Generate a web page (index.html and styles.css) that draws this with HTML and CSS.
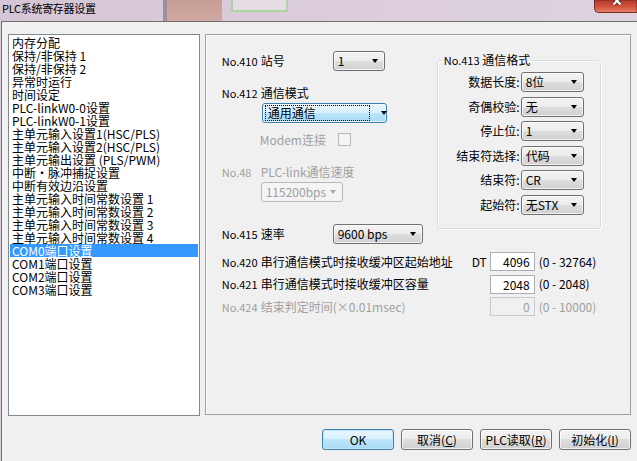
FILE: index.html
```html
<!DOCTYPE html>
<html lang="zh-CN">
<head>
    <meta charset="UTF-8">
    <title>PLC系统寄存器设置</title>
    <link rel="stylesheet" href="styles.css">
</head>
<body>
    <div class="titlebar">
        <span class="title">PLC系统寄存器设置</span>
        <span class="close-btn">
            <svg width="43" height="13" viewBox="0 0 43 13">
                <defs>
                    <linearGradient id="closeGrad" x1="0" y1="0" x2="0" y2="1">
                        <stop offset="0" stop-color="#b23a2c"/>
                        <stop offset="0.55" stop-color="#d4533e"/>
                        <stop offset="1" stop-color="#e58670"/>
                    </linearGradient>
                </defs>
                <path d="M0.5 0 V8.5 Q0.5 12.5 4.5 12.5 H43 V0 Z" fill="url(#closeGrad)" stroke="#7d2c22"/>
                <path d="M19.5 -3 L26.5 4.5 M26.5 -3 L19.5 4.5" stroke="#5a2a26" stroke-width="4"/>
                <path d="M19.5 -3 L26.5 4.5 M26.5 -3 L19.5 4.5" stroke="#ffffff" stroke-width="2.2"/>
            </svg>
        </span>
    </div>

    <div class="dialog">
        <div class="main">
            <ul class="nav-list">
                <li>内存分配</li>
                <li>保持/非保持 1</li>
                <li>保持/非保持 2</li>
                <li>异常时运行</li>
                <li>时间设定</li>
                <li>PLC-linkW0-0设置</li>
                <li>PLC-linkW0-1设置</li>
                <li>主单元输入设置1(HSC/PLS)</li>
                <li>主单元输入设置2(HSC/PLS)</li>
                <li>主单元输出设置 (PLS/PWM)</li>
                <li>中断·脉冲捕捉设置</li>
                <li>中断有效边沿设置</li>
                <li>主单元输入时间常数设置 1</li>
                <li>主单元输入时间常数设置 2</li>
                <li>主单元输入时间常数设置 3</li>
                <li>主单元输入时间常数设置 4</li>
                <li class="active">COM0端口设置</li>
                <li>COM1端口设置</li>
                <li>COM2端口设置</li>
                <li>COM3端口设置</li>
            </ul>

            <div class="panel">
                <div class="panel-top">
                    <div class="col-left">
                        <div class="row">
                            <div class="lbl lbl-short"><span class="no">No.410</span>站号</div>
                            <div class="combo w-station"><span class="combo-text">1</span><span class="combo-arrow"></span></div>
                        </div>

                        <div class="lbl lbl-mode"><span class="no">No.412</span>通信模式</div>
                        <div class="combo focus w-mode"><span class="combo-text">通用通信</span><span class="combo-arrow"></span></div>

                        <div class="modem">
                            <span class="modem-text">Modem连接</span>
                            <span class="check"></span>
                        </div>

                        <div class="lbl lbl-link disabled"><span class="no">No.48</span>PLC-link通信速度</div>
                        <div class="combo off w-link"><span class="combo-text">115200bps</span><span class="combo-arrow"></span></div>

                        <div class="row row-rate">
                            <div class="lbl lbl-short"><span class="no">No.415</span>速率</div>
                            <div class="combo w-rate"><span class="combo-text">9600 bps</span><span class="combo-arrow"></span></div>
                        </div>
                    </div>

                    <fieldset class="group">
                        <legend><span class="no-legend">No.413</span> 通信格式</legend>
                        <div class="g-row">
                            <span class="g-lbl">数据长度:</span>
                            <div class="combo w-fmt"><span class="combo-text">8位</span><span class="combo-arrow"></span></div>
                        </div>
                        <div class="g-row">
                            <span class="g-lbl">奇偶校验:</span>
                            <div class="combo w-fmt"><span class="combo-text">无</span><span class="combo-arrow"></span></div>
                        </div>
                        <div class="g-row">
                            <span class="g-lbl">停止位:</span>
                            <div class="combo w-fmt"><span class="combo-text">1</span><span class="combo-arrow"></span></div>
                        </div>
                        <div class="g-row">
                            <span class="g-lbl">结束符选择:</span>
                            <div class="combo w-fmt"><span class="combo-text">代码</span><span class="combo-arrow"></span></div>
                        </div>
                        <div class="g-row">
                            <span class="g-lbl">结束符:</span>
                            <div class="combo w-fmt"><span class="combo-text">CR</span><span class="combo-arrow"></span></div>
                        </div>
                        <div class="g-row">
                            <span class="g-lbl">起始符:</span>
                            <div class="combo w-fmt"><span class="combo-text">无STX</span><span class="combo-arrow"></span></div>
                        </div>
                    </fieldset>
                </div>

                <div class="fields">
                    <div class="f-row">
                        <div class="lbl lbl-long"><span class="no">No.420</span>串行通信模式时接收缓冲区起始地址</div>
                        <span class="prefix">DT</span>
                        <span class="num">4096</span>
                        <span class="range">(0 - 32764)</span>
                    </div>
                    <div class="f-row">
                        <div class="lbl lbl-long"><span class="no">No.421</span>串行通信模式时接收缓冲区容量</div>
                        <span class="prefix"></span>
                        <span class="num">2048</span>
                        <span class="range">(0 - 2048)</span>
                    </div>
                    <div class="f-row disabled">
                        <div class="lbl lbl-long"><span class="no">No.424</span>结束判定时间(×0.01msec)</div>
                        <span class="prefix"></span>
                        <span class="num off">0</span>
                        <span class="range">(0 - 10000)</span>
                    </div>
                </div>
            </div>
        </div>

        <div class="buttons">
            <button class="btn btn-default">OK</button>
            <button class="btn">取消(<u>C</u>)</button>
            <button class="btn">PLC读取(<u>R</u>)</button>
            <button class="btn">初始化(<u>I</u>)</button>
        </div>
    </div>
</body>
</html>
```

FILE: styles.css
```css
* {
    margin: 0;
    padding: 0;
    box-sizing: border-box;
}

body {
    width: 637px;
    height: 461px;
    overflow: hidden;
    background: #dccfdc;
    font-family: "Noto Sans CJK SC", "Liberation Sans", sans-serif;
    font-size: 12px;
    color: #000;
}

/* barra de titulo (vidro desfocado) */
.titlebar {
    height: 21px;
    display: flex;
    align-items: flex-start;
    background:
        linear-gradient(#e6dce6, #e6dce6) 233px 0 / 53px 10px no-repeat,
        linear-gradient(#a9d79e, #a9d79e) 231px 0 / 57px 12px no-repeat,
        linear-gradient(to bottom, #c89e94, #cfaaa2) 167px 0 / 55px 21px no-repeat,
        linear-gradient(#9d8f9d, #9d8f9d) 163px 0 / 4px 21px no-repeat,
        linear-gradient(to right, #d5c5d5, #dacbda 40%, #dfd3df);
}

.title {
    font-size: 11px;
    line-height: 16px;
    padding-left: 2px;
    letter-spacing: -0.3px;
}

.close-btn {
    margin-left: auto;
    width: 43px;
    height: 13px;
    display: block;
}

.close-btn svg {
    display: block;
}

.dialog {
    margin-left: 1px;
    height: 440px;
    border-top: 1px solid #6f6f6f;
    border-left: 1px solid #6f6f6f;
    background: #f0f0f0;
    padding: 12px 6px 0 6px;
}

.main {
    display: flex;
    align-items: flex-start;
    gap: 5px;
}

/* lista da esquerda */
.nav-list {
    list-style: none;
    width: 192px;
    height: 382px;
    background: #fff;
    border: 1px solid #828790;
    padding: 1px;
}

.nav-list li {
    height: 13px;
    line-height: 13px;
    padding-left: 2px;
    white-space: nowrap;
}

.nav-list li.active {
    background: #3399ff;
    color: #fff;
}

/* painel da direita */
.panel {
    width: 427px;
    height: 381px;
    border: 1px solid #a0a0a0;
    box-shadow: inset 1px 1px #fff;
    padding: 16px 0 0 16px;
}

.panel-top {
    display: flex;
    align-items: flex-start;
}

.col-left {
    width: 215px;
}

.row {
    display: flex;
    align-items: center;
    height: 20px;
}

.lbl {
    line-height: 14px;
    white-space: nowrap;
}

.lbl .no {
    display: inline-block;
    width: 39px;
    font-size: 11px;
}

.no-legend {
    font-size: 11px;
}

.lbl-short {
    width: 111px;
}

.lbl-mode {
    margin-top: 15px;
}

.lbl-link {
    margin-top: 19px;
}

.lbl-long {
    width: 250px;
}

.disabled,
.disabled .range {
    color: #a0a0a0;
}

/* combobox */
.combo {
    display: flex;
    align-items: center;
    height: 20px;
    border: 1px solid #707070;
    border-radius: 3px;
    background: linear-gradient(#f3f3f3, #ececec 50%, #dedede 50%, #d0d0d0);
    box-shadow: inset 0 0 0 1px rgba(255,255,255,0.7);
    padding: 0 6px 0 4px;
}

.combo-text {
    flex: 1;
    line-height: 14px;
    white-space: nowrap;
}

.combo-arrow {
    width: 0;
    height: 0;
    border-left: 3.5px solid transparent;
    border-right: 3.5px solid transparent;
    border-top: 4px solid #000;
}

.combo.focus {
    border-color: #3c7fb1;
    background: linear-gradient(#eaf6fd, #d9f0fc 50%, #bee6fd 50%, #a7d9f5);
    padding-left: 2px;
    margin-top: 3px;
    margin-left: 40px;
}

.combo.focus .combo-text {
    flex: none;
    width: 105px;
    height: 16px;
    line-height: 14px;
    border: 1px dotted #000;
    padding-left: 2px;
    margin-right: 11px;
}

.combo.off {
    border-color: #b9b9b9;
    background: #f4f4f4;
    box-shadow: none;
    color: #a0a0a0;
    margin-top: 3px;
    margin-left: 39px;
}

.combo.off .combo-arrow {
    border-top-color: #a8a8a8;
}

.w-station { width: 52px; }
.w-mode { width: 125px; }
.w-link { width: 82px; }
.w-rate { width: 90px; }
.w-fmt { width: 63px; }

.modem {
    display: flex;
    align-items: center;
    height: 13px;
    margin-top: 10px;
    margin-left: 38px;
    color: #a0a0a0;
}

.modem-text {
    width: 78px;
}

.check {
    width: 13px;
    height: 13px;
    border: 1px solid #b8b8b8;
    background: #f4f4f4;
}

.row-rate {
    margin-top: 22px;
}

/* caixa de grupo */
.group {
    width: 164px;
    margin-top: 2px;
    border: 1px solid #d5dfe5;
    border-radius: 3px;
    box-shadow: inset 1px 1px #fff, 1px 1px #fff;
    padding: 0 0 13px 0;
}

.group legend {
    margin-left: 5px;
    padding: 0 1px;
    line-height: 14px;
}

.g-row {
    display: flex;
    align-items: center;
    height: 20px;
    margin-top: 4.5px;
}

.g-row:first-of-type {
    margin-top: 5px;
}

.g-lbl {
    width: 83px;
    text-align: right;
    padding-right: 1px;
    line-height: 14px;
}

/* campos numericos */
.fields {
    margin-top: 8px;
    display: flex;
    flex-direction: column;
    gap: 3.5px;
}

.f-row {
    display: flex;
    align-items: center;
    height: 19px;
}

.prefix {
    width: 18px;
    line-height: 14px;
}

.num {
    width: 45px;
    height: 19px;
    border: 1px solid #abadb3;
    background: #fff;
    text-align: right;
    padding-right: 4px;
    line-height: 17px;
}

.num.off {
    background: #f0f0f0;
    border-color: #c9c9c9;
}

.range {
    margin-left: 4px;
    line-height: 14px;
}

/* botoes */
.buttons {
    display: flex;
    justify-content: flex-end;
    gap: 7px;
    margin-top: 13px;
}

.btn {
    width: 72px;
    height: 21px;
    border: 1px solid #707070;
    border-radius: 3px;
    background: linear-gradient(#f3f3f3, #ececec 50%, #dedede 50%, #d0d0d0);
    box-shadow: inset 0 0 0 1px rgba(255,255,255,0.7);
    font: inherit;
    line-height: 17px;
    color: #000;
}

.btn-default {
    border-color: #3c7fb1;
    background: linear-gradient(#eaf6fd, #d9f0fc 50%, #bee6fd 50%, #a7d9f5);
    box-shadow: inset 0 0 0 1px #c4e5f6;
}
```
